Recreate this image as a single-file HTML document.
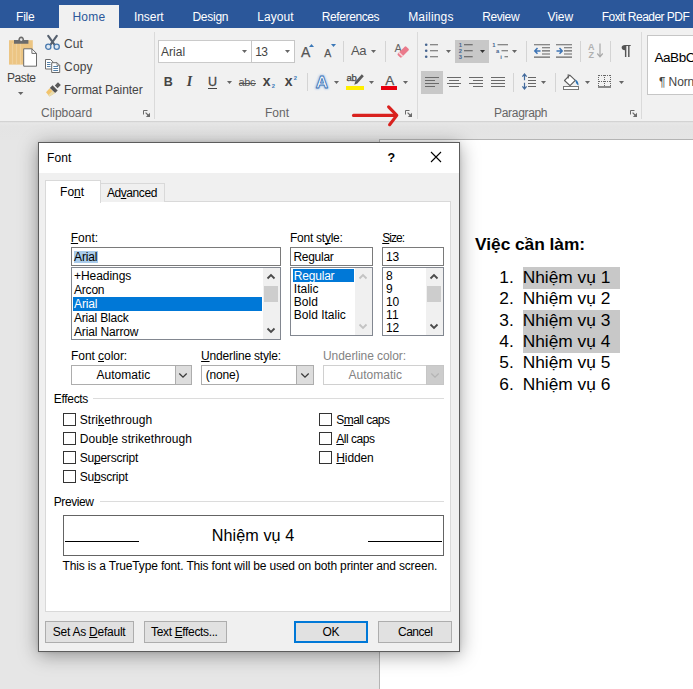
<!DOCTYPE html>
<html lang="vi">
<head>
<meta charset="utf-8">
<title>Font</title>
<style>
html,body{margin:0;padding:0;}
body{width:693px;height:689px;overflow:hidden;position:relative;background:#e6e6e6;font-family:"Liberation Sans",sans-serif;font-size:12px;color:#444;}
.t{position:absolute;white-space:pre;}
.t u{text-decoration:underline;text-decoration-thickness:1px;text-underline-offset:0.9px;text-decoration-skip-ink:none;}
svg{position:absolute;overflow:visible;}
</style>
</head>
<body>
<div style="position:absolute;left:0px;top:0px;width:693px;height:28px;background:#2b579a"></div>
<div style="position:absolute;left:59px;top:4.5px;width:60.3px;height:24.5px;background:#f1f1f1"></div>
<div style="position:absolute;left:0px;top:28px;width:693px;height:93px;background:#f1f1f1"></div>
<div style="position:absolute;left:0px;top:121px;width:693px;height:19px;background:linear-gradient(#d3d3d3 0,#d3d3d3 1px,#e0e0e0 1px,#e7e7e7 2.5px,#e4e4e4 5px,#e5e5e5)"></div>
<div style="position:absolute;left:379px;top:139px;width:315px;height:551px;background:#fff;border:1px solid #b4b4b4;box-sizing:border-box"></div>
<div class="t" style="left:16.10px;top:9.00px;letter-spacing:-0.261px;font-size:12px;line-height:16px;color:#fff;">File</div>
<div class="t" style="left:134.00px;top:9.00px;letter-spacing:-0.069px;font-size:12px;line-height:16px;color:#fff;">Insert</div>
<div class="t" style="left:192.40px;top:9.00px;letter-spacing:-0.243px;font-size:12px;line-height:16px;color:#fff;">Design</div>
<div class="t" style="left:257.20px;top:9.00px;letter-spacing:0.061px;font-size:12px;line-height:16px;color:#fff;">Layout</div>
<div class="t" style="left:321.80px;top:9.00px;letter-spacing:-0.397px;font-size:12px;line-height:16px;color:#fff;">References</div>
<div class="t" style="left:408.20px;top:9.00px;letter-spacing:0.173px;font-size:12px;line-height:16px;color:#fff;">Mailings</div>
<div class="t" style="left:482.20px;top:9.00px;letter-spacing:-0.393px;font-size:12px;line-height:16px;color:#fff;">Review</div>
<div class="t" style="left:547.40px;top:9.00px;letter-spacing:-0.024px;font-size:12px;line-height:16px;color:#fff;">View</div>
<div class="t" style="left:601.70px;top:9.00px;letter-spacing:-0.527px;font-size:12px;line-height:16px;color:#fff;">Foxit Reader PDF</div>
<div class="t" style="left:72.40px;top:9.00px;letter-spacing:0.296px;font-size:12px;line-height:16px;color:#2b579a;">Home</div>
<div class="t" style="left:7.00px;top:70.00px;letter-spacing:-0.418px;font-size:12px;line-height:16px;color:#444;">Paste</div>
<div class="t" style="left:64.10px;top:36.00px;letter-spacing:0.071px;font-size:12px;line-height:16px;color:#444;">Cut</div>
<div class="t" style="left:64.10px;top:59.00px;letter-spacing:0.121px;font-size:12px;line-height:16px;color:#444;">Copy</div>
<div class="t" style="left:64.10px;top:82.00px;letter-spacing:-0.061px;font-size:12px;line-height:16px;color:#444;">Format Painter</div>
<div class="t" style="left:41.00px;top:105.00px;letter-spacing:-0.031px;font-size:12px;line-height:16px;color:#666;">Clipboard</div>
<div class="t" style="left:264.90px;top:105.00px;letter-spacing:0.071px;font-size:12px;line-height:16px;color:#666;">Font</div>
<div class="t" style="left:494.10px;top:105.00px;letter-spacing:-0.327px;font-size:12px;line-height:16px;color:#666;">Paragraph</div>
<div style="position:absolute;left:153.5px;top:32px;width:1px;height:87px;background:#dadada"></div>
<div style="position:absolute;left:416.5px;top:32px;width:1px;height:87px;background:#dadada"></div>
<div style="position:absolute;left:641.3px;top:32px;width:1px;height:87px;background:#dadada"></div>
<div style="position:absolute;left:343.3px;top:41px;width:1px;height:21px;background:#d4d4d4"></div>
<div style="position:absolute;left:385.2px;top:41px;width:1px;height:21px;background:#d4d4d4"></div>
<div style="position:absolute;left:307px;top:73px;width:1px;height:18px;background:#d4d4d4"></div>
<div style="position:absolute;left:526.3px;top:41px;width:1px;height:21px;background:#d4d4d4"></div>
<div style="position:absolute;left:580px;top:41px;width:1px;height:21px;background:#d4d4d4"></div>
<div style="position:absolute;left:610.2px;top:41px;width:1px;height:21px;background:#d4d4d4"></div>
<div style="position:absolute;left:513px;top:73px;width:1px;height:19px;background:#d4d4d4"></div>
<div style="position:absolute;left:555.2px;top:73px;width:1px;height:19px;background:#d4d4d4"></div>
<div style="position:absolute;left:157.5px;top:40px;width:94px;height:22.5px;background:#fff;border:1px solid #cacaca;box-sizing:border-box"></div>
<div style="position:absolute;left:250.5px;top:40px;width:44.5px;height:22.5px;background:#fff;border:1px solid #c6c6c6;box-sizing:border-box"></div>
<div class="t" style="left:160.90px;top:44.00px;letter-spacing:0.057px;font-size:12px;line-height:16px;color:#444;">Arial</div>
<div class="t" style="left:255.20px;top:44.00px;letter-spacing:-0.680px;font-size:12px;line-height:16px;color:#444;">13</div>
<div style="position:absolute;left:455px;top:40px;width:34px;height:22.5px;background:#c8c8c8"></div>
<div style="position:absolute;left:421px;top:71.3px;width:21.6px;height:22.3px;background:#c8c8c8"></div>
<div style="position:absolute;left:647px;top:35px;width:53px;height:59.5px;background:#fff;border:1px solid #c6c6c6;box-sizing:border-box"></div>
<div class="t" style="left:654.40px;top:48.00px;font-size:13.5px;line-height:19px;color:#000;letter-spacing:-0.4px;">AaBbC</div>
<div class="t" style="left:659.00px;top:74.00px;font-size:12px;line-height:16px;color:#444;letter-spacing:-0.1px;">¶ Norn</div>
<svg style="left:8px;top:36px" width="30" height="32" viewBox="0 0 30 32">
<rect x="1" y="4.2" width="23.8" height="24.4" fill="#ecc583"/>
<path d="M4.5 7v21M8.5 7v21M12.5 7v21" stroke="#f0d09a" stroke-width="1.2"/>
<path d="M6 4h4.3c0-2 1.2-3.6 2.9-3.6s2.9 1.600 2.900 3.600h4.300v3.700H6z" fill="#6b6b6b"/>
<circle cx="13.2" cy="3.6" r="1.300" fill="#e8e8e8"/>
<path d="M15.700 12.800h8.200l4.600 4.600v12.800H15.700z" fill="#fff" stroke="#6b6b6b" stroke-width="1"/>
<path d="M23.900 12.800v4.600h4.600" fill="none" stroke="#6b6b6b" stroke-width="1"/>
</svg>
<svg style="left:18px;top:92px" width="5.4" height="3" viewBox="0 0 5.4 3"><path d="M0 0H5.4L2.7 3Z" fill="#666"/></svg>
<svg style="left:45.4px;top:35.3px" width="15" height="15" viewBox="0 0 15 15">
<path d="M3.200 0.800L9.800 10.200M11.800 0.800L5.200 10.200" stroke="#56606e" stroke-width="2.100" fill="none" stroke-linecap="round"/>
<circle cx="3.300" cy="11.700" r="2.600" fill="#dfe9f3" stroke="#4878ad" stroke-width="1.300"/>
<circle cx="11.700" cy="11.700" r="2.600" fill="#dfe9f3" stroke="#4878ad" stroke-width="1.300"/>
</svg>
<svg style="left:45px;top:59px" width="16" height="14" viewBox="0 0 16 14">
<path d="M0.500 0.500h5l2.300 2.300v7.200H0.500z" fill="#fff" stroke="#6b6b6b"/>
<path d="M2 3.500h3.500M2 5.500h3.500M2 7.500h3.500" stroke="#41729e" stroke-width="0.900"/>
<path d="M6.700 3.700h5.300l2.700 2.700v7.100H6.700z" fill="#fff" stroke="#6b6b6b"/>
<path d="M12 3.700v2.700h2.700" fill="none" stroke="#6b6b6b" stroke-width="0.800"/>
<path d="M8.300 7.500h4.800M8.300 9.500h4.800M8.300 11.500h4.800" stroke="#41729e" stroke-width="0.900"/>
</svg>
<svg style="left:46px;top:81.5px" width="15" height="15" viewBox="0 0 15 15">
<path d="M12 0.200l2.800 2.800-3.200 3.200-2.800-2.800z" fill="#5a5a5a"/>
<path d="M6.500 3.300l5.200 5.200-2.600 2.600L3.900 5.900z" fill="#555"/>
<path d="M3.700 6.300l5 5-5.200 3.200L0 10.200z" fill="#f2c46c"/>
<path d="M6.300 8.900l2.400 2.400-5.200 3.200-1.300-1.300z" fill="#e9dcae"/>
</svg>
<svg style="left:242.3px;top:50px" width="5" height="3" viewBox="0 0 5 3"><path d="M0 0H5L2.5 3Z" fill="#666"/></svg>
<svg style="left:285.3px;top:50px" width="5" height="3" viewBox="0 0 5 3"><path d="M0 0H5L2.5 3Z" fill="#666"/></svg>
<div class="t" style="left:301px;top:41.500px;font-size:14px;line-height:20px;color:#555;-webkit-text-stroke:0.250px #555;">A</div>
<svg style="left:309px;top:43.5px" width="5" height="3" viewBox="0 0 5 3"><path d="M0 3L2.500 0L5 3Z" fill="#3b78b8"/></svg>
<div class="t" style="left:324.300px;top:44.500px;font-size:10.500px;line-height:16px;color:#555;-webkit-text-stroke:0.250px #555;">A</div>
<svg style="left:331px;top:43.7px" width="5" height="3" viewBox="0 0 5 3"><path d="M0 0H5L2.500 3Z" fill="#3b78b8"/></svg>
<div class="t" style="left:351px;top:40.500px;font-size:13px;line-height:20px;color:#555;letter-spacing:-0.300px">Aa</div>
<svg style="left:371px;top:50px" width="5" height="3" viewBox="0 0 5 3"><path d="M0 0H5L2.5 3Z" fill="#666"/></svg>
<div class="t" style="left:394.500px;top:39.700px;font-size:11px;line-height:16px;color:#666;">A</div>
<svg style="left:395px;top:43px" width="15" height="15" viewBox="0 0 15 15">
<g transform="rotate(-45 8.200 9)"><rect x="2.200" y="6.300" width="12" height="5.400" rx="1.200" fill="#ea7a8b"/><rect x="4" y="6.300" width="1.600" height="5.400" fill="#f8d3d8"/></g>
</svg>
<div class="t" style="left:163.800px;top:73px;font-size:12.500px;line-height:18px;color:#444;font-weight:bold;">B</div>
<div class="t" style="left:186.800px;top:72.500px;font-size:14px;line-height:18px;color:#444;font-style:italic;font-family:'Liberation Serif',serif;font-weight:bold">I</div>
<div class="t" style="left:208px;top:73px;font-size:12.500px;line-height:18px;color:#444;-webkit-text-stroke:0.300px #444;">U</div>
<div style="position:absolute;left:208px;top:87.500px;width:9px;height:1px;background:#444"></div>
<svg style="left:227.3px;top:81.3px" width="5" height="3" viewBox="0 0 5 3"><path d="M0 0H5L2.5 3Z" fill="#666"/></svg>
<div class="t" style="left:238.500px;top:74px;font-size:11px;line-height:16px;color:#555;letter-spacing:-0.400px">abc</div>
<div style="position:absolute;left:238.500px;top:82.500px;width:17.500px;height:1px;background:#555"></div>
<div class="t" style="left:262.800px;top:70.500px;font-size:14px;line-height:20px;color:#444;font-weight:bold;">x</div>
<div class="t" style="left:271.800px;top:82px;font-size:5.800px;line-height:8px;color:#3b78b8;font-weight:bold;">2</div>
<div class="t" style="left:284.800px;top:70.500px;font-size:14px;line-height:20px;color:#444;font-weight:bold;">x</div>
<div class="t" style="left:293.800px;top:74px;font-size:5.800px;line-height:8px;color:#3b78b8;font-weight:bold;">2</div>
<svg style="left:313px;top:72px" width="18" height="18" viewBox="0 0 18 18">
<defs><filter id="gl" x="-30%" y="-30%" width="160%" height="160%"><feGaussianBlur stdDeviation="0.9"/></filter></defs>
<text x="8.800" y="16.200" text-anchor="middle" font-family="Liberation Sans,sans-serif" font-size="17" font-weight="bold" fill="#9dc0ec" stroke="#9dc0ec" stroke-width="2.200" stroke-linejoin="round" filter="url(#gl)">A</text>
<text x="8.800" y="16.200" text-anchor="middle" font-family="Liberation Sans,sans-serif" font-size="17" font-weight="bold" fill="#fff" stroke="#3d74b5" stroke-width="0.850" stroke-linejoin="round">A</text>
</svg>
<svg style="left:334.3px;top:81.3px" width="5" height="3" viewBox="0 0 5 3"><path d="M0 0H5L2.5 3Z" fill="#666"/></svg>
<div class="t" style="left:346.500px;top:72px;font-size:9.500px;line-height:12px;color:#444;letter-spacing:-0.300px;-webkit-text-stroke:0.250px #444">ab</div>
<svg style="left:352px;top:74px" width="12" height="12" viewBox="0 0 12 12">
<path d="M9.800 0.200l2 2-6.500 7.300-3 1.200 1-3.200z" fill="#5a5a5a"/>
</svg>
<div style="position:absolute;left:346px;top:86.300px;width:18px;height:3.700px;background:#ffef00"></div>
<svg style="left:369px;top:81.3px" width="5" height="3" viewBox="0 0 5 3"><path d="M0 0H5L2.5 3Z" fill="#666"/></svg>
<div class="t" style="left:385.200px;top:72px;font-size:13.500px;line-height:18px;color:#555;-webkit-text-stroke:0.250px #555;">A</div>
<div style="position:absolute;left:381px;top:86.300px;width:15.800px;height:3.700px;background:#e8000e"></div>
<svg style="left:403px;top:81.3px" width="5" height="3" viewBox="0 0 5 3"><path d="M0 0H5L2.5 3Z" fill="#666"/></svg>
<svg style="left:142.5px;top:110.3px" width="7" height="7" viewBox="0 0 7 7"><path d="M0.500 4.500V0.500H4.500" fill="none" stroke="#6a6a6a" stroke-width="1"/><path d="M2.600 2.600L6 6" fill="none" stroke="#6a6a6a" stroke-width="1.200"/><path d="M7 2.800V7H2.800Z" fill="#6a6a6a"/></svg>
<svg style="left:404.8px;top:110.3px" width="7" height="7" viewBox="0 0 7 7"><path d="M0.500 4.500V0.500H4.500" fill="none" stroke="#6a6a6a" stroke-width="1"/><path d="M2.600 2.600L6 6" fill="none" stroke="#6a6a6a" stroke-width="1.200"/><path d="M7 2.800V7H2.800Z" fill="#6a6a6a"/></svg>
<svg style="left:630px;top:110.3px" width="7" height="7" viewBox="0 0 7 7"><path d="M0.500 4.500V0.500H4.500" fill="none" stroke="#6a6a6a" stroke-width="1"/><path d="M2.600 2.600L6 6" fill="none" stroke="#6a6a6a" stroke-width="1.200"/><path d="M7 2.800V7H2.800Z" fill="#6a6a6a"/></svg>
<svg style="left:350px;top:104px" width="52" height="24" viewBox="0 0 52 24"><path d="M3.500 11.400H45.500" stroke="#d9221f" stroke-width="3.100" fill="none" stroke-linecap="round"/><path d="M38.600 2.900L46.800 11.400L39.600 20.700" stroke="#d9221f" stroke-width="3.100" fill="none" stroke-linecap="round" stroke-linejoin="round"/></svg>
<svg style="left:424px;top:43px" width="15" height="15" viewBox="0 0 15 15">
<circle cx="2.200" cy="1.700" r="1.300" fill="#45648f"/><circle cx="2.200" cy="7.700" r="1.300" fill="#45648f"/><circle cx="2.200" cy="13.700" r="1.300" fill="#45648f"/>
<path d="M6 1.700h8M6 7.700h8M6 13.700h8" stroke="#666" stroke-width="1.100"/>
</svg>
<svg style="left:446px;top:50px" width="5" height="3" viewBox="0 0 5 3"><path d="M0 0H5L2.5 3Z" fill="#666"/></svg>
<svg style="left:458px;top:42px" width="16" height="17" viewBox="0 0 16 17">
<g font-family="Liberation Sans,sans-serif" font-size="5.800" font-weight="bold" fill="#45648f"><text x="0.800" y="4.900">1</text><text x="0.800" y="10.900">2</text><text x="0.800" y="16.900">3</text></g>
<path d="M6 2.700h8.700M6 8.700h8.700M6 14.700h8.700" stroke="#555" stroke-width="1.100"/>
</svg>
<svg style="left:480px;top:50px" width="5" height="3" viewBox="0 0 5 3"><path d="M0 0H5L2.5 3Z" fill="#333"/></svg>
<svg style="left:492px;top:42px" width="17" height="17" viewBox="0 0 17 17">
<g font-family="Liberation Sans,sans-serif" font-size="5.800" font-weight="bold" fill="#45648f"><text x="0.300" y="4.900">1</text><text x="4" y="10.900">a</text><text x="8.200" y="16.900">i</text></g>
<path d="M5.500 2.700h10.500M9.500 8.700h6.500M12.500 14.700h3.500" stroke="#666" stroke-width="1.100"/>
</svg>
<svg style="left:512px;top:50px" width="5" height="3" viewBox="0 0 5 3"><path d="M0 0H5L2.5 3Z" fill="#666"/></svg>
<svg style="left:534px;top:43.5px" width="16" height="14" viewBox="0 0 16 14">
<path d="M0 0.700h16M8 3.800h8M8 6.900h8M8 10h8M0 13.100h16" stroke="#666" stroke-width="1.100"/>
<path d="M6.500 6.900H1M3.500 4L0.800 6.900L3.500 9.800" stroke="#3d74b5" stroke-width="1.500" fill="none"/>
</svg>
<svg style="left:556px;top:43.5px" width="16" height="14" viewBox="0 0 16 14">
<path d="M0 0.700h16M8 3.800h8M8 6.900h8M8 10h8M0 13.100h16" stroke="#666" stroke-width="1.100"/>
<path d="M0.500 6.900H6M3.500 4L6.200 6.900L3.500 9.800" stroke="#3d74b5" stroke-width="1.500" fill="none"/>
</svg>
<svg style="left:588px;top:43px" width="15" height="15" viewBox="0 0 15 15">
<g font-family="Liberation Sans,sans-serif" font-size="9" font-weight="bold" fill="#b0b0b0"><text x="0" y="6.800">A</text><text x="0.400" y="14.700">Z</text></g>
<path d="M12 0.500V13.500M9.300 10.500L12 13.800L14.700 10.500" stroke="#a8a8a8" stroke-width="1.200" fill="none"/>
</svg>
<div class="t" style="left:620.500px;top:40.200px;font-size:14.500px;line-height:20px;color:#555;font-weight:bold;transform:scaleX(1.28);transform-origin:0 0">¶</div>
<svg style="left:425px;top:76px" width="15" height="12" viewBox="0 0 15 12"><path d="M0 1.5H14M0 4.5H10M0 7.5H14M0 10.5H10" stroke="#6a6a6a" stroke-width="1" shape-rendering="crispEdges"/></svg>
<svg style="left:447px;top:76px" width="15" height="12" viewBox="0 0 15 12"><path d="M0 1.5H14M2 4.5H12M0 7.5H14M2 10.5H12" stroke="#6a6a6a" stroke-width="1" shape-rendering="crispEdges"/></svg>
<svg style="left:469px;top:76px" width="15" height="12" viewBox="0 0 15 12"><path d="M0 1.5H14M4 4.5H14M0 7.5H14M4 10.5H14" stroke="#6a6a6a" stroke-width="1" shape-rendering="crispEdges"/></svg>
<svg style="left:491px;top:76px" width="15" height="12" viewBox="0 0 15 12"><path d="M0 1.5H14M0 4.5H14M0 7.5H14M0 10.5H14" stroke="#6a6a6a" stroke-width="1" shape-rendering="crispEdges"/></svg>
<svg style="left:522px;top:73px" width="15" height="17" viewBox="0 0 15 17">
<path d="M2.500 1.200V7.300M2.500 9.700V15.800M0.400 3.600L2.500 1L4.600 3.600M0.400 13.400L2.500 16L4.600 13.400" stroke="#41699c" stroke-width="1.200" fill="none"/>
<path d="M6 4.500h8M6 7.500h8M6 10.500h8M6 13.500h8" stroke="#666" stroke-width="1" shape-rendering="crispEdges"/>
</svg>
<svg style="left:541px;top:81.3px" width="5" height="3" viewBox="0 0 5 3"><path d="M0 0H5L2.5 3Z" fill="#666"/></svg>
<svg style="left:563px;top:73.5px" width="17" height="16" viewBox="0 0 17 16">
<path d="M6.800 1.200l5.500 5.200-5.300 5.300-5.500-5.200z" fill="#fff" stroke="#5a5a5a" stroke-width="1.100" stroke-linejoin="round"/>
<path d="M5.200 0.300v4.200" stroke="#5a5a5a" stroke-width="1.100"/>
<path d="M12.300 5.600c2.200 1 3.400 3.200 3.200 5.800-1.900-0.800-3.200-2.900-3.200-5.800z" fill="#2e75b6"/>
<rect x="0.500" y="12.500" width="15" height="3" fill="#fff" stroke="#777" stroke-width="1"/>
</svg>
<svg style="left:585px;top:81.3px" width="5" height="3" viewBox="0 0 5 3"><path d="M0 0H5L2.5 3Z" fill="#666"/></svg>
<svg style="left:598px;top:74px" width="14" height="14" viewBox="0 0 14 14">
<path d="M0.500 1H13M0.500 1V13M12.500 1V13M6.500 1V13M0.500 7H13" stroke="#666" stroke-width="1" stroke-dasharray="1 1" fill="none" shape-rendering="crispEdges"/>
<path d="M0 13H13" stroke="#444" stroke-width="1.200"/>
</svg>
<svg style="left:619px;top:81.3px" width="5" height="3" viewBox="0 0 5 3"><path d="M0 0H5L2.5 3Z" fill="#666"/></svg>
<div style="position:absolute;left:523px;top:267px;width:97px;height:21.5px;background:#c8c8c8"></div>
<div style="position:absolute;left:523px;top:310px;width:97px;height:42.5px;background:#c8c8c8"></div>
<div class="t" style="left:475.10px;top:233.00px;letter-spacing:-0.043px;font-size:17.33px;line-height:22px;color:#000;font-weight:bold;">Việc cần làm:</div>
<div class="t" style="left:499.30px;top:266.00px;font-size:17.33px;line-height:22px;color:#000;">1.</div>
<div class="t" style="left:522.70px;top:266.00px;font-size:17.33px;line-height:22px;color:#000;">Nhiệm vụ 1</div>
<div class="t" style="left:499.30px;top:287.00px;font-size:17.33px;line-height:22px;color:#000;">2.</div>
<div class="t" style="left:522.70px;top:287.00px;font-size:17.33px;line-height:22px;color:#000;">Nhiệm vụ 2</div>
<div class="t" style="left:499.30px;top:309.00px;font-size:17.33px;line-height:22px;color:#000;">3.</div>
<div class="t" style="left:522.70px;top:309.00px;font-size:17.33px;line-height:22px;color:#000;">Nhiệm vụ 3</div>
<div class="t" style="left:499.30px;top:330.00px;font-size:17.33px;line-height:22px;color:#000;">4.</div>
<div class="t" style="left:522.70px;top:330.00px;font-size:17.33px;line-height:22px;color:#000;">Nhiệm vụ 4</div>
<div class="t" style="left:499.30px;top:351.00px;font-size:17.33px;line-height:22px;color:#000;">5.</div>
<div class="t" style="left:522.70px;top:351.00px;font-size:17.33px;line-height:22px;color:#000;">Nhiệm vụ 5</div>
<div class="t" style="left:499.30px;top:373.00px;font-size:17.33px;line-height:22px;color:#000;">6.</div>
<div class="t" style="left:522.70px;top:373.00px;font-size:17.33px;line-height:22px;color:#000;">Nhiệm vụ 6</div>
<div style="position:absolute;left:38px;top:142px;width:422px;height:509.5px;background:#f0f0f0;border:1px solid #5c5c5c;box-sizing:border-box;box-shadow:0 3px 18px rgba(0,0,0,.38),0 0 3px rgba(0,0,0,.12)"></div>
<div style="position:absolute;left:39px;top:143px;width:420px;height:30px;background:#fff"></div>
<div class="t" style="left:47.00px;top:150.00px;letter-spacing:0.096px;font-size:12px;line-height:16px;color:#000;">Font</div>
<div class="t" style="left:387.60px;top:149.00px;font-size:12.5px;line-height:18px;color:#000;font-weight:bold;">?</div>
<svg style="left:431px;top:152px" width="10" height="10" viewBox="0 0 10 10"><path d="M0 0L10 10M10 0L0 10" stroke="#000" stroke-width="1.1" fill="none"/></svg>
<div style="position:absolute;left:45px;top:201px;width:406px;height:411px;background:#fff;border:1px solid #d9d9d9;box-sizing:border-box"></div>
<div style="position:absolute;left:100px;top:183px;width:65px;height:18.5px;background:#f0f0f0;border:1px solid #d9d9d9;border-bottom:none;box-sizing:border-box"></div>
<div style="position:absolute;left:45px;top:180px;width:55.5px;height:22.5px;background:#fff;border:1px solid #d9d9d9;border-bottom:none;box-sizing:border-box"></div>
<div class="t" style="left:60.00px;top:184.00px;letter-spacing:0.046px;font-size:12px;line-height:16px;color:#000;">Fo<u>n</u>t</div>
<div class="t" style="left:106.90px;top:185.00px;letter-spacing:-0.422px;font-size:12px;line-height:16px;color:#000;">Ad<u>v</u>anced</div>
<div class="t" style="left:70.80px;top:230.00px;letter-spacing:-0.032px;font-size:12px;line-height:16px;color:#000;"><u>F</u>ont:</div>
<div class="t" style="left:290.00px;top:230.00px;letter-spacing:-0.260px;font-size:12px;line-height:16px;color:#000;">Font st<u>y</u>le:</div>
<div class="t" style="left:382.20px;top:230.00px;letter-spacing:-0.918px;font-size:12px;line-height:16px;color:#000;"><u>S</u>ize:</div>
<div style="position:absolute;left:71px;top:247px;width:210px;height:19px;background:#fff;border:1px solid #7a7a7a;box-sizing:border-box"></div>
<div style="position:absolute;left:290px;top:247px;width:83px;height:19px;background:#fff;border:1px solid #7a7a7a;box-sizing:border-box"></div>
<div style="position:absolute;left:382px;top:247px;width:62px;height:19px;background:#fff;border:1px solid #7a7a7a;box-sizing:border-box"></div>
<div style="position:absolute;left:73.7px;top:251px;width:23.9px;height:12px;background:#a9cbea"></div>
<div class="t" style="left:74.00px;top:249.00px;letter-spacing:-0.123px;font-size:12px;line-height:16px;color:#000;">Arial</div>
<div class="t" style="left:293.40px;top:249.00px;letter-spacing:-0.262px;font-size:12px;line-height:16px;color:#000;">Regular</div>
<div class="t" style="left:386.00px;top:249.00px;letter-spacing:-0.180px;font-size:12px;line-height:16px;color:#000;">13</div>
<div style="position:absolute;left:71px;top:267px;width:210px;height:73px;background:#fff;border:1px solid #828790;box-sizing:border-box"></div>
<div style="position:absolute;left:290px;top:267px;width:83px;height:69px;background:#fff;border:1px solid #828790;box-sizing:border-box"></div>
<div style="position:absolute;left:382px;top:267px;width:62px;height:69px;background:#fff;border:1px solid #828790;box-sizing:border-box"></div>
<div style="position:absolute;left:73px;top:297px;width:189px;height:14px;background:#0078d7"></div>
<div class="t" style="left:74.00px;top:268.00px;letter-spacing:-0.047px;font-size:12px;line-height:16px;color:#000;">+Headings</div>
<div class="t" style="left:74.00px;top:282.00px;font-size:12px;line-height:16px;color:#000;letter-spacing:-0.2px;">Arcon</div>
<div class="t" style="left:74.00px;top:296.00px;letter-spacing:-0.123px;font-size:12px;line-height:16px;color:#fff;">Arial</div>
<div class="t" style="left:74.00px;top:310.00px;font-size:12px;line-height:16px;color:#000;letter-spacing:-0.2px;">Arial Black</div>
<div class="t" style="left:74.00px;top:324.00px;letter-spacing:-0.135px;font-size:12px;line-height:16px;color:#000;">Arial Narrow</div>
<div style="position:absolute;left:292.5px;top:269.2px;width:61.7px;height:12.8px;background:#0078d7"></div>
<div class="t" style="left:293.80px;top:268.00px;letter-spacing:-0.204px;font-size:12px;line-height:16px;color:#fff;">Regular</div>
<div class="t" style="left:293.80px;top:281.00px;letter-spacing:0.002px;font-size:12px;line-height:16px;color:#000;">Italic</div>
<div class="t" style="left:293.80px;top:294.00px;letter-spacing:0.042px;font-size:12px;line-height:16px;color:#000;">Bold</div>
<div class="t" style="left:293.80px;top:307.00px;letter-spacing:-0.003px;font-size:12px;line-height:16px;color:#000;">Bold Italic</div>
<div class="t" style="left:386.00px;top:268.00px;font-size:12px;line-height:16px;color:#000;">8</div>
<div class="t" style="left:386.00px;top:281.00px;font-size:12px;line-height:16px;color:#000;">9</div>
<div class="t" style="left:386.00px;top:294.00px;letter-spacing:-0.280px;font-size:12px;line-height:16px;color:#000;">10</div>
<div class="t" style="left:386.00px;top:307.00px;letter-spacing:0.166px;font-size:12px;line-height:16px;color:#000;">11</div>
<div class="t" style="left:386.00px;top:320.00px;letter-spacing:-0.280px;font-size:12px;line-height:16px;color:#000;">12</div>
<div style="position:absolute;left:263px;top:268px;width:17px;height:71px;background:#f0f0f0"></div><div style="position:absolute;left:263.5px;top:286px;width:14.5px;height:16px;background:#cdcdcd"></div><svg style="left:266.5px;top:274px" width="8" height="5" viewBox="0 0 8 5"><path d="M0.500 4.500L4 1L7.500 4.500" fill="none" stroke="#4a4a4a" stroke-width="1.800"/></svg><svg style="left:266.5px;top:328px" width="8" height="5" viewBox="0 0 8 5"><path d="M0.500 0.500L4 4L7.500 0.500" fill="none" stroke="#4a4a4a" stroke-width="1.800"/></svg><div style="position:absolute;left:355px;top:268px;width:17px;height:67px;background:#f0f0f0"></div><svg style="left:358.5px;top:274px" width="8" height="5" viewBox="0 0 8 5"><path d="M0.500 4.500L4 1L7.500 4.500" fill="none" stroke="#c3c3c3" stroke-width="1.800"/></svg><svg style="left:358.5px;top:324px" width="8" height="5" viewBox="0 0 8 5"><path d="M0.500 0.500L4 4L7.500 0.500" fill="none" stroke="#c3c3c3" stroke-width="1.800"/></svg><div style="position:absolute;left:426px;top:268px;width:17px;height:67px;background:#f0f0f0"></div><div style="position:absolute;left:426.5px;top:286px;width:14.5px;height:16px;background:#cdcdcd"></div><svg style="left:429.5px;top:274px" width="8" height="5" viewBox="0 0 8 5"><path d="M0.500 4.500L4 1L7.500 4.500" fill="none" stroke="#4a4a4a" stroke-width="1.800"/></svg><svg style="left:429.5px;top:324px" width="8" height="5" viewBox="0 0 8 5"><path d="M0.500 0.500L4 4L7.500 0.500" fill="none" stroke="#4a4a4a" stroke-width="1.800"/></svg>
<div class="t" style="left:71.00px;top:348.00px;letter-spacing:-0.055px;font-size:12px;line-height:16px;color:#000;">Font <u>c</u>olor:</div>
<div class="t" style="left:201.10px;top:348.00px;letter-spacing:-0.176px;font-size:12px;line-height:16px;color:#000;"><u>U</u>nderline style:</div>
<div class="t" style="left:323.00px;top:348.00px;letter-spacing:-0.065px;font-size:12px;line-height:16px;color:#838383;">Underline color:</div>
<div style="position:absolute;left:71px;top:365.3px;width:120.5px;height:19.5px;background:#fff;border:1px solid #adadad;box-sizing:border-box"></div>
<div style="position:absolute;left:201px;top:365.3px;width:113px;height:19.5px;background:#fff;border:1px solid #adadad;box-sizing:border-box"></div>
<div style="position:absolute;left:323px;top:365.3px;width:121.2px;height:19.5px;background:#fff;border:1px solid #d0d0d0;box-sizing:border-box"></div>
<div class="t" style="left:96.40px;top:367.00px;letter-spacing:0.049px;font-size:12px;line-height:16px;color:#000;">Automatic</div>
<div class="t" style="left:205.80px;top:367.00px;letter-spacing:-0.198px;font-size:12px;line-height:16px;color:#000;">(none)</div>
<div class="t" style="left:348.40px;top:367.00px;letter-spacing:0.038px;font-size:12px;line-height:16px;color:#838383;">Automatic</div>
<div style="position:absolute;left:174.5px;top:365.300px;width:17px;height:19.500px;background:#dddddd;border:1px solid #adadad;box-sizing:border-box"></div>
<svg style="left:179px;top:373px" width="8" height="5" viewBox="0 0 8 5"><path d="M0.300 0.500L4 4.200L7.700 0.500" fill="none" stroke="#3a3a3a" stroke-width="1.300"/></svg>
<div style="position:absolute;left:296.3px;top:365.300px;width:17.7px;height:19.500px;background:#dddddd;border:1px solid #adadad;box-sizing:border-box"></div>
<svg style="left:301.15px;top:373px" width="8" height="5" viewBox="0 0 8 5"><path d="M0.300 0.500L4 4.200L7.700 0.500" fill="none" stroke="#3a3a3a" stroke-width="1.300"/></svg>
<div style="position:absolute;left:426px;top:365.300px;width:18.2px;height:19.500px;background:#cccccc;border:1px solid #c6c6c6;box-sizing:border-box"></div>
<svg style="left:431.1px;top:373px" width="8" height="5" viewBox="0 0 8 5"><path d="M0.300 0.500L4 4.200L7.700 0.500" fill="none" stroke="#b4b4b4" stroke-width="1.300"/></svg>
<div class="t" style="left:53.70px;top:391.00px;letter-spacing:-0.296px;font-size:12px;line-height:16px;color:#000;">Effects</div>
<div style="position:absolute;left:93px;top:398px;width:351px;height:1px;background:#dcdcdc"></div>
<div style="position:absolute;left:63px;top:413px;width:13px;height:13px;background:#fff;border:1px solid #333;box-sizing:border-box"></div>
<div class="t" style="left:79.70px;top:412.00px;letter-spacing:0.087px;font-size:12px;line-height:16px;color:#000;">Stri<u>k</u>ethrough</div>
<div style="position:absolute;left:63px;top:432px;width:13px;height:13px;background:#fff;border:1px solid #333;box-sizing:border-box"></div>
<div class="t" style="left:79.70px;top:431.00px;letter-spacing:0.078px;font-size:12px;line-height:16px;color:#000;">Doub<u>l</u>e strikethrough</div>
<div style="position:absolute;left:63px;top:451px;width:13px;height:13px;background:#fff;border:1px solid #333;box-sizing:border-box"></div>
<div class="t" style="left:79.70px;top:450.00px;letter-spacing:-0.218px;font-size:12px;line-height:16px;color:#000;">Su<u>p</u>erscript</div>
<div style="position:absolute;left:63px;top:470px;width:13px;height:13px;background:#fff;border:1px solid #333;box-sizing:border-box"></div>
<div class="t" style="left:79.70px;top:469.00px;letter-spacing:-0.203px;font-size:12px;line-height:16px;color:#000;">Su<u>b</u>script</div>
<div style="position:absolute;left:319.3px;top:413px;width:13px;height:13px;background:#fff;border:1px solid #333;box-sizing:border-box"></div>
<div class="t" style="left:336.30px;top:412.00px;letter-spacing:-0.569px;font-size:12px;line-height:16px;color:#000;">S<u>m</u>all caps</div>
<div style="position:absolute;left:319.3px;top:432px;width:13px;height:13px;background:#fff;border:1px solid #333;box-sizing:border-box"></div>
<div class="t" style="left:336.30px;top:431.00px;letter-spacing:-0.479px;font-size:12px;line-height:16px;color:#000;"><u>A</u>ll caps</div>
<div style="position:absolute;left:319.3px;top:451px;width:13px;height:13px;background:#fff;border:1px solid #333;box-sizing:border-box"></div>
<div class="t" style="left:336.30px;top:450.00px;letter-spacing:-0.122px;font-size:12px;line-height:16px;color:#000;"><u>H</u>idden</div>
<div class="t" style="left:53.70px;top:494.00px;letter-spacing:-0.398px;font-size:12px;line-height:16px;color:#000;">Preview</div>
<div style="position:absolute;left:100px;top:500.5px;width:344px;height:1px;background:#dcdcdc"></div>
<div style="position:absolute;left:63px;top:515.2px;width:381px;height:40.6px;background:#fff;border:1px solid #646464;box-sizing:border-box"></div>
<div style="position:absolute;left:65.4px;top:541px;width:73.6px;height:1px;background:#000"></div>
<div style="position:absolute;left:368.4px;top:541px;width:73.6px;height:1px;background:#000"></div>
<div class="t" style="left:211.80px;top:525.00px;letter-spacing:0.053px;font-size:16.2px;line-height:20px;color:#000;">Nhiệm vụ 4</div>
<div class="t" style="left:62.60px;top:558.00px;letter-spacing:-0.162px;font-size:12px;line-height:16px;color:#000;">This is a TrueType font. This font will be used on both printer and screen.</div>
<div style="position:absolute;left:45px;top:621px;width:89px;height:21.5px;background:#e1e1e1;border:1px solid #adadad;box-sizing:border-box"></div>
<div style="position:absolute;left:144px;top:621px;width:83px;height:21.5px;background:#e1e1e1;border:1px solid #adadad;box-sizing:border-box"></div>
<div style="position:absolute;left:294px;top:621px;width:74px;height:21.5px;background:#e1e1e1;border:2px solid #0078d7;box-sizing:border-box"></div>
<div style="position:absolute;left:377.5px;top:621px;width:74.5px;height:21.5px;background:#e1e1e1;border:1px solid #adadad;box-sizing:border-box"></div>
<div class="t" style="left:52.70px;top:624.00px;letter-spacing:-0.239px;font-size:12px;line-height:16px;color:#000;">Set As <u>D</u>efault</div>
<div class="t" style="left:151.10px;top:624.00px;letter-spacing:-0.354px;font-size:12px;line-height:16px;color:#000;">Text <u>E</u>ffects...</div>
<div class="t" style="left:322.40px;top:624.00px;letter-spacing:-0.272px;font-size:12px;line-height:16px;color:#000;">OK</div>
<div class="t" style="left:398.00px;top:624.00px;letter-spacing:-0.493px;font-size:12px;line-height:16px;color:#000;">Cancel</div>
</body>
</html>
